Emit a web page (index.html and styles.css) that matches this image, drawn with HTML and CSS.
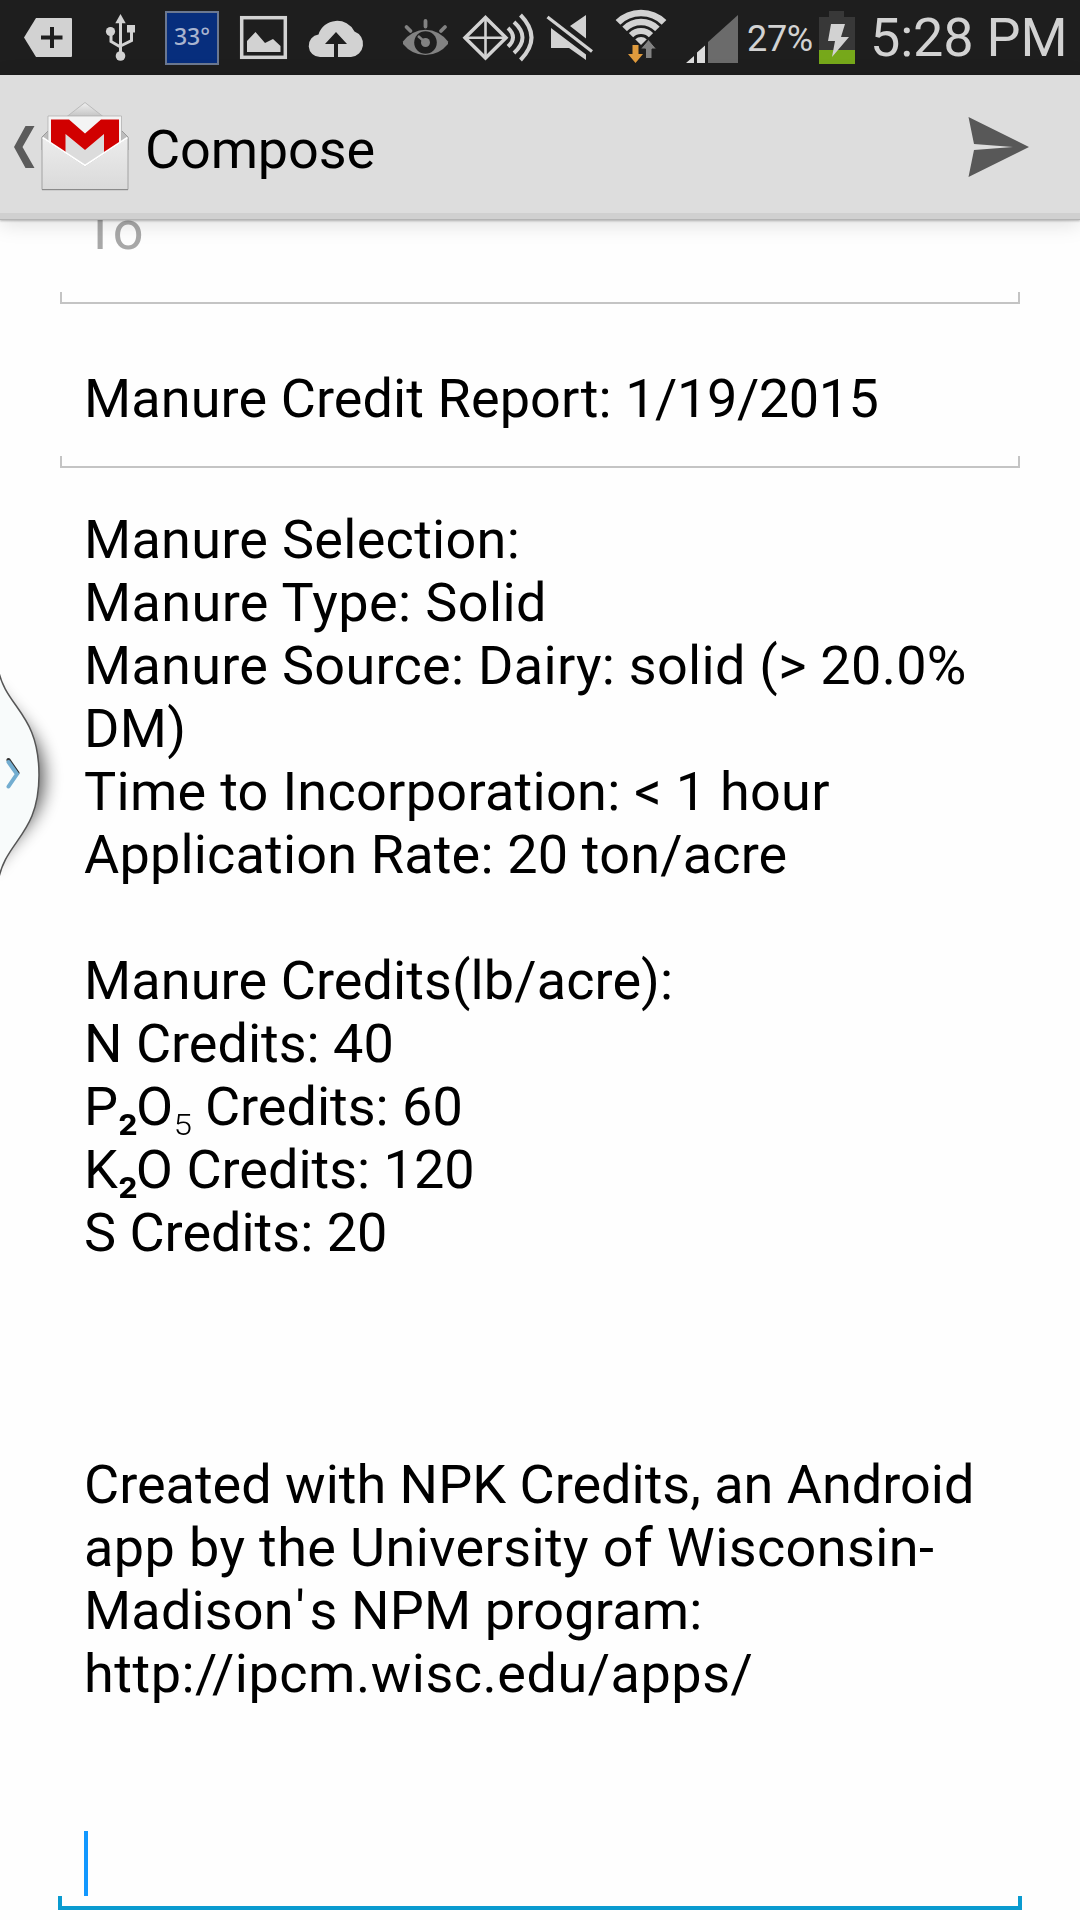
FILE: index.html
```
<!DOCTYPE html>
<html lang="en">
<head>
<meta charset="utf-8">
<title>Compose</title>
<link rel="stylesheet" href="styles.css">
</head>
<body>
<header class="status">
  <svg class="w92" viewBox="0 0 92 75"><path fill="#d2d2d2" d="M24 37.500 36 18H71Q72 18 72 19V56Q72 57 71 57H36Z"/><path stroke="#1e1e1e" stroke-width="4" d="M41 37.500H62.500M52 27V48"/></svg>
  <svg class="w62" viewBox="92 0 62 75"><g fill="#d2d2d2"><path d="M120.500 14 125.700 23.200H115.300Z"/><circle cx="120.500" cy="56" r="4.800"/><circle cx="110.500" cy="31.500" r="4.600"/><path d="M127 25H135V32.500H127Z"/></g><path fill="none" stroke="#d2d2d2" stroke-width="3" d="M120.500 22V54M111 32V41.500L120.500 47M131.500 32V40.500L120.500 46"/></svg>
  <div class="temp"><span>33°</span></div>
  <svg class="w80" viewBox="224 0 80 75"><rect x="241.700" y="17.700" width="43.600" height="39.600" fill="none" stroke="#d2d2d2" stroke-width="3.500"/><path fill="#d2d2d2" d="M247 41 255.500 32 265 43 273 39 280.500 46V52H247Z"/></svg>
  <svg class="w72" viewBox="304 0 72 75"><path fill="#d2d2d2" d="M320 57A11.300 11.300 0 0 1 318.500 34.500A19.500 19.500 0 0 1 354.500 31.500A13.200 13.200 0 0 1 351 57Z"/><path fill="#1e1e1e" d="M336 32 347 44H338V58H334V44H325Z"/></svg>
  <svg class="w84" viewBox="376 0 84 75"><path fill="#828282" d="M403 41.500Q412 30 425.500 29.700 439 30 448 41.500V44Q439 55 425.500 55 412 55 403 44Z"/><circle cx="425.500" cy="42.500" r="11.300" fill="#1e1e1e"/><circle cx="425.500" cy="42.500" r="4.500" fill="#828282"/><path fill="none" stroke="#828282" stroke-width="3.800" stroke-linecap="round" d="M425.500 21V26.500M406.500 27 410.500 31M445 27 441 31"/><path stroke="#828282" stroke-width="2.500" d="M418 36 425.500 42.500"/></svg>
  <svg class="w80" viewBox="460 0 80 75"><g fill="none" stroke="#d2d2d2"><path stroke-width="3.500" d="M485.500 17.500 506 37.700 485.500 58 465 37.700Z"/><path stroke-width="2.600" d="M485.500 17V58M465 37.700H506"/><path stroke-width="4" d="M508 28Q518 37.500 508 46.500M514 22Q531 37.500 514 53M520.500 15Q542.500 37.500 520.500 60"/></g></svg>
  <svg class="w66" viewBox="540 0 66 75"><path fill="#d2d2d2" d="M586 15V38.500L570 26ZM551 28 586 54.500V60L569 48H551Z"/><path stroke="#d2d2d2" stroke-width="3.200" d="M547.500 17 592 51.500"/></svg>
  <svg class="w74" viewBox="606 0 74 75"><defs><clipPath id="fan"><path d="M641 45 612 16.500V5H670V16.500Z"/></clipPath></defs><g clip-path="url(#fan)" fill="none" stroke="#d2d2d2"><circle cx="641" cy="46" r="33" stroke-width="6.500"/><circle cx="641" cy="45" r="23" stroke-width="6.500"/><circle cx="641" cy="45" r="14" stroke-width="6"/><circle cx="641" cy="45" r="4" stroke-width="8"/></g><path fill="#e09b3d" d="M632.500 45H638.500V54H643L635.500 63 628 54H632.500Z"/><path fill="#828282" stroke="#1e1e1e" stroke-width="1" d="M648.500 39.500 656.500 49H652V58.500H645.500V49H640.500Z"/></svg>
  <svg class="w64" viewBox="680 0 64 75"><path fill="#dcdcdc" d="M686 63 694 56V63ZM697 52.500 705 45.500V63H697Z"/><path fill="#6b6b6b" d="M708 63V42L738 15V63Z"/></svg>
  <span class="percent">27%</span>
  <svg class="w48" viewBox="814 0 48 75"><path fill="#383838" d="M829 11H844V17H855V50H819V17H829Z"/><path fill="#76a81a" d="M819 50H855V64H819Z"/><path fill="#d2d2d2" d="M831 24H845L841 37H849L832 57 835 41H828Z"/></svg>
  <time class="clock">5:28 PM</time>
</header>
<div class="bar">
  <svg class="nav" viewBox="0 75 140 138">
    <defs>
      <linearGradient id="env" x1="0" y1="0" x2="0" y2="1"><stop offset="0" stop-color="#ececec"/><stop offset="1" stop-color="#dadada"/></linearGradient>
      <linearGradient id="flap" x1="0" y1="0" x2="0" y2="1"><stop offset="0" stop-color="#f0f0f0"/><stop offset="1" stop-color="#c4c4c4"/></linearGradient>
    </defs>
    <path fill="#5b5b5b" d="M25.500 126H34.500L22.500 147 34.500 168H25.500L14 147Z"/>
    <path fill="url(#flap)" stroke="#bbb" stroke-width="1" d="M67 116.500 85 102.500 103 116.500Z"/>
    <path fill="#bdbdbd" stroke="#999" stroke-width="1" d="M42 137 48 131H122L128 137V150H42Z"/>
    <path fill="#f4f4f4" stroke="#aaa" stroke-width=".7" d="M48 116H121.500V165H48Z"/>
    <path fill="#dcdcdc" d="M65 134 85 150 104 134V160L85 170 65 160Z"/>
    <path fill="#d10000" d="M51 119.500H69L85 133.500 101 119.500H119V152H104V134L85 150 65.500 134V152H51Z"/>
    <path fill="url(#env)" stroke="#a2a2a2" stroke-width="1" d="M42 137.500 85 166 128 137.500V189.500H42Z"/>
    <path fill="none" stroke="#fff" stroke-width="1.800" d="M42.500 137.500 85 165.500 127.500 137.500"/>
    <path stroke="#868686" d="M42 189.700H128"/>
  </svg>
  <h1 class="title">Compose</h1>
  <svg class="send" viewBox="948 75 100 138"><path fill="#585858" d="M968.500 117 1029 147 968.500 177 974 150 1013 147 974 144Z"/></svg>
</div>
<main class="form">
  <div class="field to">To</div>
  <div class="field subject"><span class="s10">Manure Credit Report: </span><span class="tight">1/19/2015</span></div>
  <div class="field message">
    <p class="s30">Manure Selection:</p>
    <p class="s40">Manure Type: Solid</p>
    <p class="s30">Manure Source: Dairy: solid (&gt; 20.0%</p>
    <p class="s40">DM)</p>
    <p class="s30">Time to Incorporation: &lt; 1 hour</p>
    <p class="s20">Application Rate: 20 ton/acre</p>
    <p></p>
    <p class="s10">Manure Credits(lb/acre):</p>
    <p>N Credits: 40</p>
    <p>P<span class="two">₂</span>O<span class="five">₅</span> Credits: 60</p>
    <p>K<span class="two">₂</span>O Credits: 120</p>
    <p>S Credits: 20</p>
    <p></p><p></p><p></p>
    <p>Created with NPK Credits, an Android</p>
    <p class="s40">app by the University of Wisconsin-</p>
    <p class="s20">Madiso<span class="apos">n'</span>s NPM program:</p>
    <p class="s50">http://ipcm.wisc.edu/apps/</p>
    <p></p><p></p>
    <p class="caret"></p>
  </div>
</main>
<svg class="tab" viewBox="0 640 100 270">
  <defs><filter id="soft" x="-100%" y="-50%" width="300%" height="200%"><feGaussianBlur stdDeviation="9"/></filter></defs>
  <path fill="#000" opacity=".65" filter="url(#soft)" d="M-10 685C10 720 44 730 44 778 44 822 10 835-10 870Z"/>
  <path fill="#f8fbfb" stroke="#555" stroke-width="1.500" d="M-2 668C5 708 39 712 39 775 39 836 5 840-2 882Z"/>
  <path fill="none" stroke="#333" stroke-width="4" stroke-linecap="round" d="M8.500 760 17.500 773"/>
  <path fill="none" stroke="#73add0" stroke-width="4" stroke-linecap="round" d="M8.500 762 17 774 8.500 786.500"/>
</svg>
</body>
</html>
```
FILE: styles.css
```
* { box-sizing: border-box; margin: 0; padding: 0; }
body {
  position: relative;
  width: 1080px;
  height: 1920px;
  overflow: hidden;
  background: #fefefe;
  color: #000;
  font-family: Roboto, sans-serif;
  font-size: 54px;
  line-height: 63px;
}
svg { display: block; flex: none; }
.status {
  display: flex;
  height: 75px;
  background: #1e1e1e;
  color: #d2d2d2;
  white-space: nowrap;
}
.status svg { height: 75px; }
.w48 { width: 48px; }
.w62 { width: 62px; }
.w64 { width: 64px; }
.w66 { width: 66px; }
.w72 { width: 72px; }
.w74 { width: 74px; }
.w80 { width: 80px; }
.w84 { width: 84px; }
.w92 { width: 92px; }
.temp {
  width: 54px;
  height: 54px;
  margin: 11px 5px 0 11px;
  border: 2px solid #6b7891;
  background: #072e7d;
  color: #a9b4cf;
  font: 500 23px/47px "Noto Sans", sans-serif;
  text-align: center;
}
.percent {
  width: 70px;
  padding-left: 3px;
  font-size: 36px;
  line-height: 79px;
  letter-spacing: -.3px;
}
.clock {
  width: 218px;
  padding-left: 8px;
  line-height: 75px;
  letter-spacing: -.2px;
}
.bar {
  position: relative;
  z-index: 1;
  display: flex;
  height: 145px;
  background: #ddd;
  border-bottom: 1px solid #b4b4b4;
  box-shadow: inset 0 -6px #d0d0d0, 0 1px 2px rgba(0, 0, 0, .25), 0 4px 20px rgba(0, 0, 0, .13);
}
.nav { width: 140px; height: 138px; }
.title {
  flex: 1;
  padding: 43px 0 0 5px;
  font-size: 54px;
  font-weight: 400;
  letter-spacing: -.15px;
}
.send { width: 100px; height: 138px; margin-right: 32px; }
.form {
  display: flex;
  flex-direction: column;
  margin: -21px 60px 0;
}
.field {
  position: relative;
  padding-left: 24px;
  border-bottom: 2px solid #c4c4c4;
  white-space: pre;
}
.field::before, .field::after {
  content: "";
  position: absolute;
  bottom: 0;
  width: 2px;
  height: 10px;
  background: #c4c4c4;
}
.field::before { left: 0; }
.field::after { right: 0; }
.to { height: 105px; color: #a8a8a8; letter-spacing: -.8px; }
.subject { height: 164px; padding-top: 63px; }
.message {
  height: 1442px;
  margin: 0 -2px;
  padding: 40px 0 0 26px;
  border-bottom: 4px solid #0a9bd0;
  white-space: normal;
}
.message::before, .message::after { width: 4px; background: #0a9bd0; }
.message p { height: 63px; white-space: nowrap; }
.tight { letter-spacing: -.4px; }
.s10 { letter-spacing: .1px; }
.s20 { letter-spacing: .18px; }
.s30 { letter-spacing: .29px; }
.s40 { letter-spacing: .39px; }
.s50 { letter-spacing: .52px; }
.apos { letter-spacing: 4.5px; }
.two { font-weight: 500; letter-spacing: -2px; }
.five { font-weight: 200; letter-spacing: -1px; }
.message .caret { width: 4px; height: 65px; background: #1298ff; }
.tab {
  position: absolute;
  left: 0;
  top: 640px;
  width: 100px;
  height: 270px;
}
```
